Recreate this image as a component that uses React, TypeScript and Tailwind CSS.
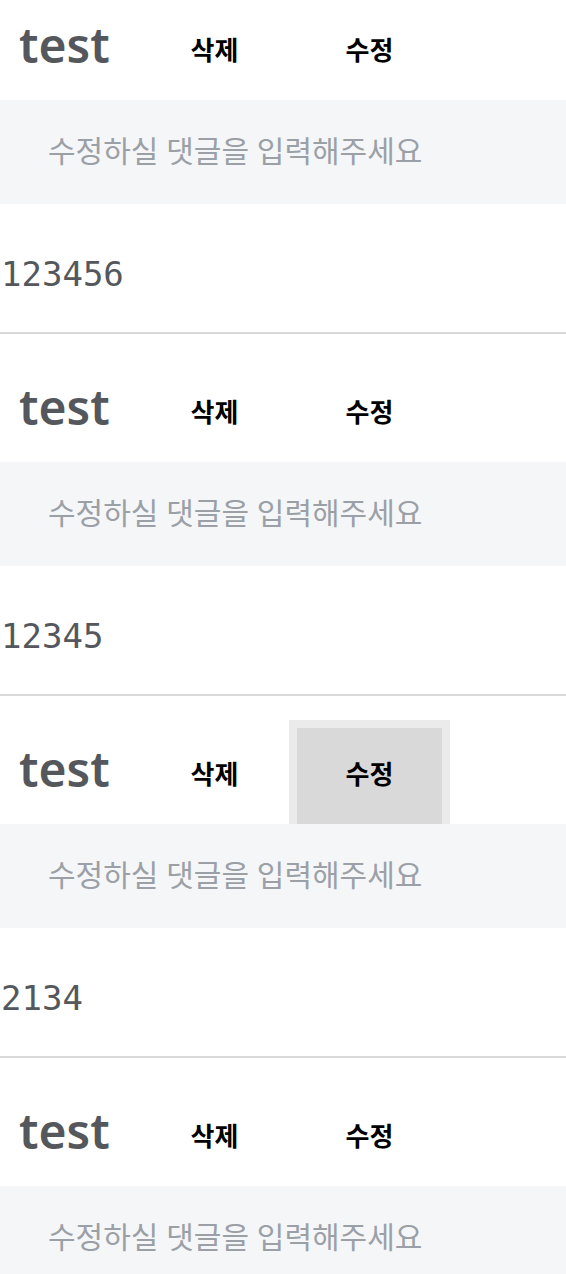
import { useState } from 'react'

type Comment = { id: number; author: string; body: string }

const comments: Comment[] = [
  { id: 1, author: 'test', body: '123456' },
  { id: 2, author: 'test', body: '12345' },
  { id: 3, author: 'test', body: '2134' },
  { id: 4, author: 'test', body: '' },
]

const kr = { fontFamily: '"Noto Sans", "Noto Sans CJK KR", sans-serif' }

function CommentItem({ comment, active }: { comment: Comment; active: boolean }) {
  const [text, setText] = useState('')

  return (
    <li className="border-b-2 border-[#d9d9d9]">
      <div className="flex h-[128px] items-start overflow-hidden pt-[32px]" style={kr}>
        <span className="flex h-[96px] w-[142px] items-center pl-[19px] pb-[14px] text-[48px] font-semibold text-[#54585c]">
          {comment.author}
        </span>
        <button
          type="button"
          className="flex h-[96px] w-[145px] items-center justify-center pb-[4px] text-[26px] font-bold text-black"
        >
          삭제
        </button>
        <button
          type="button"
          className={
            active
              ? 'ml-[10px] flex h-[96px] w-[145px] items-center justify-center bg-[#d9d9d9] pb-[4px] text-[26px] font-bold text-black ring-8 ring-[#ebebeb]'
              : 'ml-[10px] flex h-[96px] w-[145px] items-center justify-center pb-[4px] text-[26px] font-bold text-black'
          }
        >
          수정
        </button>
      </div>
      <input
        value={text}
        onChange={(e) => setText(e.target.value)}
        placeholder="수정하실 댓글을 입력해주세요"
        className="block h-[104px] w-full bg-[#f5f6f8] px-[48px] pb-[4px] text-[30px] text-[#333] outline-none placeholder:text-[#9aa0a6]"
        style={kr}
      />
      <div
        className="flex h-[128px] items-center pl-[1px] pt-[12px] text-[34px] text-[#54585c]"
        style={{ fontFamily: '"DejaVu Sans Mono", monospace' }}
      >
        {comment.body}
      </div>
    </li>
  )
}

export default function App() {
  return (
    <main className="min-h-screen overflow-hidden bg-white">
      <ul className="-mt-[28px]">
        {comments.map((c) => (
          <CommentItem key={c.id} comment={c} active={c.id === 3} />
        ))}
      </ul>
    </main>
  )
}
